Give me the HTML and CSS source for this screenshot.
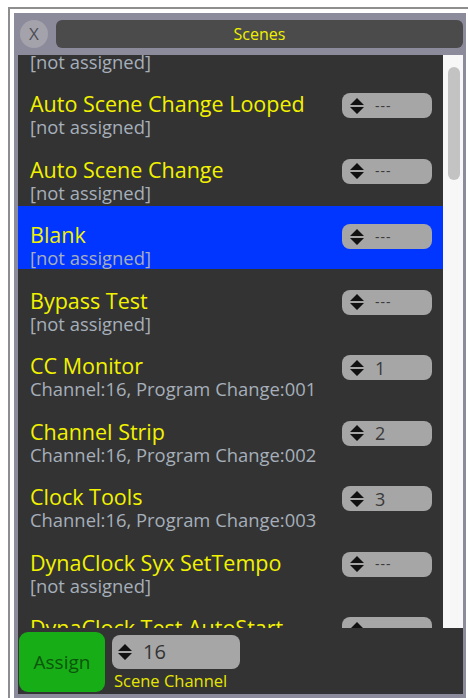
FILE: index.html
```html
<!DOCTYPE html>
<html lang="en">
<head>
<meta charset="utf-8">
<title>Scenes</title>
<link rel="stylesheet" href="styles.css">
</head>
<body>
<div class="frame">
  <div class="panel">
    <header class="header">
      <button class="close">X</button>
      <div class="title">Scenes</div>
    </header>

    <div class="list-wrap">
      <div class="list">
        <div class="rows">
          <div class="row">
            <div class="text"><div class="name">Arpeggiator</div><div class="sub">[not assigned]</div></div>
            <div class="spin"><svg class="arrows" viewBox="0 0 14 16"><path d="M7 0 L14 7 L0 7 Z M0 9 L14 9 L7 16 Z"/></svg><span class="val dash">---</span></div>
          </div>
          <div class="row">
            <div class="text"><div class="name">Auto Scene Change Looped</div><div class="sub">[not assigned]</div></div>
            <div class="spin"><svg class="arrows" viewBox="0 0 14 16"><path d="M7 0 L14 7 L0 7 Z M0 9 L14 9 L7 16 Z"/></svg><span class="val dash">---</span></div>
          </div>
          <div class="row">
            <div class="text"><div class="name">Auto Scene Change</div><div class="sub">[not assigned]</div></div>
            <div class="spin"><svg class="arrows" viewBox="0 0 14 16"><path d="M7 0 L14 7 L0 7 Z M0 9 L14 9 L7 16 Z"/></svg><span class="val dash">---</span></div>
          </div>
          <div class="row selected">
            <div class="text"><div class="name">Blank</div><div class="sub">[not assigned]</div></div>
            <div class="spin"><svg class="arrows" viewBox="0 0 14 16"><path d="M7 0 L14 7 L0 7 Z M0 9 L14 9 L7 16 Z"/></svg><span class="val dash">---</span></div>
          </div>
          <div class="row">
            <div class="text"><div class="name">Bypass Test</div><div class="sub">[not assigned]</div></div>
            <div class="spin"><svg class="arrows" viewBox="0 0 14 16"><path d="M7 0 L14 7 L0 7 Z M0 9 L14 9 L7 16 Z"/></svg><span class="val dash">---</span></div>
          </div>
          <div class="row">
            <div class="text"><div class="name">CC Monitor</div><div class="sub">Channel:16, Program Change:001</div></div>
            <div class="spin"><svg class="arrows" viewBox="0 0 14 16"><path d="M7 0 L14 7 L0 7 Z M0 9 L14 9 L7 16 Z"/></svg><span class="val">1</span></div>
          </div>
          <div class="row">
            <div class="text"><div class="name">Channel Strip</div><div class="sub">Channel:16, Program Change:002</div></div>
            <div class="spin"><svg class="arrows" viewBox="0 0 14 16"><path d="M7 0 L14 7 L0 7 Z M0 9 L14 9 L7 16 Z"/></svg><span class="val">2</span></div>
          </div>
          <div class="row">
            <div class="text"><div class="name">Clock Tools</div><div class="sub">Channel:16, Program Change:003</div></div>
            <div class="spin"><svg class="arrows" viewBox="0 0 14 16"><path d="M7 0 L14 7 L0 7 Z M0 9 L14 9 L7 16 Z"/></svg><span class="val">3</span></div>
          </div>
          <div class="row">
            <div class="text"><div class="name">DynaClock Syx SetTempo</div><div class="sub">[not assigned]</div></div>
            <div class="spin"><svg class="arrows" viewBox="0 0 14 16"><path d="M7 0 L14 7 L0 7 Z M0 9 L14 9 L7 16 Z"/></svg><span class="val dash">---</span></div>
          </div>
          <div class="row">
            <div class="text"><div class="name">DynaClock Test AutoStart</div><div class="sub">[not assigned]</div></div>
            <div class="spin"><svg class="arrows" viewBox="0 0 14 16"><path d="M7 0 L14 7 L0 7 Z M0 9 L14 9 L7 16 Z"/></svg><span class="val dash">---</span></div>
          </div>
        </div>
      </div>
      <div class="scrollbar"><div class="thumb"></div></div>
    </div>

    <footer class="footer">
      <button class="assign">Assign</button>
      <div class="channel">
        <div class="spin big"><svg class="arrows" viewBox="0 0 14 16"><path d="M7 0 L14 7 L0 7 Z M0 9 L14 9 L7 16 Z"/></svg><span class="val">16</span></div>
        <div class="label">Scene Channel</div>
      </div>
    </footer>
  </div>
</div>
</body>
</html>
```

FILE: styles.css
```css
* { box-sizing: border-box; }

html, body {
  margin: 0;
  padding: 0;
  background: #ffffff;
  overflow: hidden;
}

body {
  font-family: "Open Sans", "Noto Sans", sans-serif;
  height: 698px;
}

/* outer window border */
.frame {
  margin: 7px 0 0 8px;
  border-top: 2px solid #8e8e8e;
  border-left: 2px solid #8e8e8e;
  padding: 4px 0 0 4px;
  height: 691px;
}

.panel {
  width: 452px;
  height: 685px;
  background: #8c8b9b;
  padding: 7px 3px 0 4px;
  display: flex;
  flex-direction: column;
}

/* title row */
.header {
  display: flex;
  align-items: center;
  gap: 8px;
  height: 28px;
  margin-bottom: 7px;
  padding-left: 2px;
}

.close {
  width: 28px;
  height: 28px;
  border-radius: 50%;
  border: none;
  background: #a4a3ac;
  color: #4e4e56;
  font-family: "Open Sans", sans-serif;
  font-size: 17px;
  font-weight: 400;
  padding: 0;
  line-height: 28px;
}

.title {
  flex: 1;
  height: 28px;
  border-radius: 6px;
  background: #4b4b4b;
  color: #f0f000;
  font-size: 16px;
  text-align: center;
  line-height: 28px;
}

/* scene list */
.list-wrap {
  display: flex;
  height: 573px;
  background: #333333;
}

.list {
  flex: 1;
  overflow: hidden;
}

.rows {
  margin-top: -45.5px;
  display: flex;
  flex-direction: column;
  gap: 3px;
}

.row {
  height: 62.5px;
  display: flex;
  justify-content: space-between;
  align-items: flex-start;
  padding: 0 11px 0 12px;
}

.row.selected {
  background: #0036ff;
}

.text {
  padding-top: 16px;
}

.name {
  color: #f2f200;
  font-size: 21.5px;
  line-height: 25px;
  white-space: nowrap;
}

.sub {
  color: #a6afba;
  font-size: 18.4px;
  line-height: 21px;
  white-space: nowrap;
}

.spin {
  margin-top: 18px;
  width: 90px;
  height: 25px;
  border-radius: 8px;
  background: #a6a6a6;
  display: flex;
  align-items: center;
  padding-left: 8px;
  gap: 11px;
  flex: none;
}

.arrows {
  width: 14px;
  height: 16px;
  fill: #111111;
  flex: none;
}

.val {
  color: #3a3a3a;
  font-size: 18px;
  line-height: 20px;
}

.val.dash {
  font-size: 14px;
  letter-spacing: 1px;
}

.scrollbar {
  width: 20px;
  background: #f7f7f7;
  padding: 12px 3px 0 5px;
}

.thumb {
  height: 113px;
  border-radius: 6px;
  background: #c3c3c3;
}

/* bottom controls */
.footer {
  height: 66px;
  background: #333333;
  display: flex;
  align-items: flex-start;
  padding: 4px 0 0 1px;
  gap: 7px;
}

.assign {
  width: 86px;
  height: 60px;
  border: none;
  border-radius: 9px;
  background: #17ad17;
  color: #0c560c;
  font-family: "Open Sans", sans-serif;
  font-size: 19px;
  padding: 0;
}

.channel {
  padding-top: 3px;
  display: flex;
  flex-direction: column;
}

.spin.big {
  margin-top: 0;
  width: 128px;
  height: 34px;
  padding-left: 6px;
  gap: 11px;
}

.spin.big .val {
  font-size: 20px;
  color: #333333;
}

.label {
  color: #e6e600;
  font-size: 16.5px;
  line-height: 18px;
  margin-top: 3px;
  padding-left: 2px;
}
```
